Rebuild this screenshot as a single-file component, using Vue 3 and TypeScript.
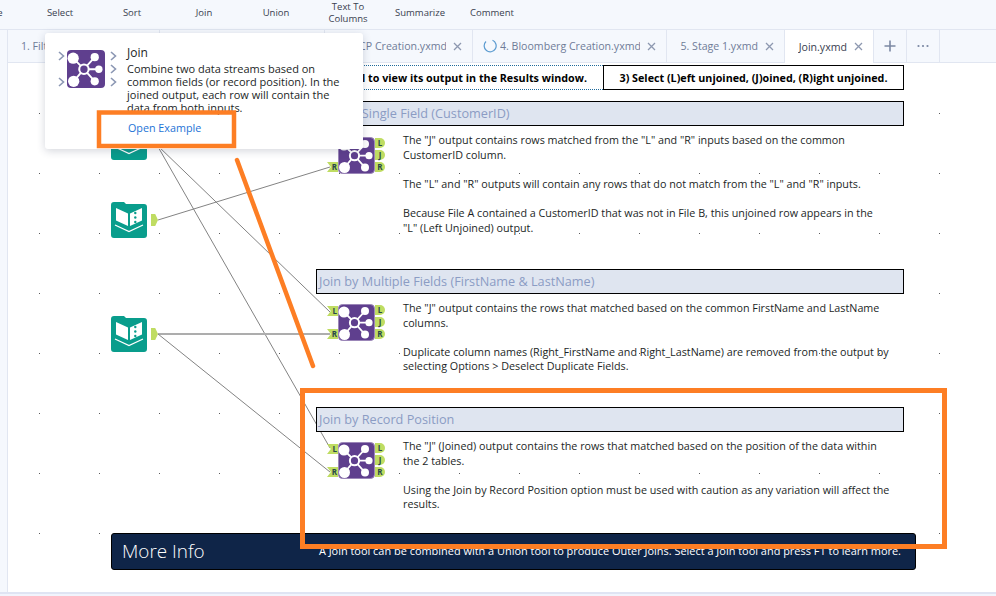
<script setup lang="ts">
const tools = ['Browse', 'Select', 'Sort', 'Join', 'Union', 'Text To Columns', 'Summarize', 'Comment']

interface Tab { label: string; width: number; active?: boolean; spin?: boolean }
const tabs: Tab[] = [
  { label: '1. Filter.yxmd', width: 152 },
  { label: '2. Mapping.yxmd', width: 165 },
  { label: '3. MCP Creation.yxmd', width: 148 },
  { label: '4. Bloomberg Creation.yxmd', width: 194, spin: true },
  { label: '5. Stage 1.yxmd', width: 118 },
  { label: 'Join.yxmd', width: 89, active: true }
]

const inputs = [61, 139, 253]
const joins = [74, 241, 379]

const sections = [
  {
    title: 'Join by Single Field (CustomerID)',
    top: 38,
    paras: [
      ['The "J" output contains rows matched from the "L" and "R" inputs based on the common', 'CustomerID column.'],
      ['The "L" and "R" outputs will contain any rows that do not match from the "L" and "R" inputs.'],
      ['Because File A contained a CustomerID that was not in File B, this unjoined row appears in the', '"L" (Left Unjoined) output.']
    ]
  },
  {
    title: 'Join by Multiple Fields (FirstName & LastName)',
    top: 206,
    paras: [
      ['The "J" output contains the rows that matched based on the common FirstName and LastName', 'columns.'],
      ['Duplicate column names (Right_FirstName and Right_LastName) are removed from the output by', 'selecting Options > Deselect Duplicate Fields.']
    ]
  },
  {
    title: 'Join by Record Position',
    top: 344,
    paras: [
      ['The "J" (Joined) output contains the rows that matched based on the position of the data within', 'the 2 tables.'],
      ['Using the Join by Record Position option must be used with caution as any variation will affect the', 'results.']
    ]
  }
]

const tipLines = [
  'Combine two data streams based on',
  'common fields (or record position). In the',
  'joined output, each row will contain the',
  'data from both inputs.'
]

const wires = [
  { d: 'M149 82 L322 249', thick: false },
  { d: 'M149 82 L322 385', thick: false },
  { d: 'M150 157 L322 104', thick: false },
  { d: 'M150 271 L322 271', thick: true },
  { d: 'M150 271 L322 409', thick: false }
]
</script>

<template>
  <div class="app">
    <header class="toolbar">
      <div v-for="t in tools" :key="t" class="tool">{{ t }}</div>
    </header>

    <div class="work">
      <div class="rail"></div>
      <div class="main">
        <nav class="tabs">
          <div
            v-for="t in tabs"
            :key="t.label"
            class="tab"
            :class="{ active: t.active }"
            :style="{ width: t.width + 'px' }"
          >
            <svg v-if="t.spin" class="spin" width="14" height="14" viewBox="0 0 14 14">
              <path d="M9.5 1.3 A6 6 0 1 1 3 2.5" fill="none" stroke="#5b9bd0" stroke-width="1.2" />
            </svg>
            <span class="tab-label">{{ t.label }}</span>
            <svg class="x" width="9" height="9" viewBox="0 0 9 9">
              <path d="M1 1 L8 8 M8 1 L1 8" stroke="currentColor" stroke-width="1.3" />
            </svg>
          </div>
          <div class="tab icon-tab plus">
            <svg width="12" height="12" viewBox="0 0 12 12">
              <path d="M6 0.5 V11.5 M0.5 6 H11.5" stroke="#7b88a3" stroke-width="1.6" />
            </svg>
          </div>
          <div class="tab icon-tab more">
            <svg width="12" height="4" viewBox="0 0 12 4">
              <circle cx="1.5" cy="2" r="1.1" fill="#7b88a3" />
              <circle cx="6" cy="2" r="1.1" fill="#7b88a3" />
              <circle cx="10.5" cy="2" r="1.1" fill="#7b88a3" />
            </svg>
          </div>
        </nav>

        <div class="canvas">
          <svg class="wires" width="988" height="529" viewBox="0 0 988 529">
            <path
              v-for="w in wires"
              :key="w.d"
              :d="w.d"
              fill="none"
              :stroke="w.thick ? '#adadad' : '#838383'"
              :stroke-width="w.thick ? 2 : 1"
            />
          </svg>

          <div class="steps">
            <div class="step step-sel">2) Select a tool to view its output in the Results window.</div>
            <div class="step step-last">3) Select (L)eft unjoined, (J)oined, (R)ight unjoined.</div>
          </div>

          <section
            v-for="s in sections"
            :key="s.title"
            class="section"
            :style="{ top: s.top + 'px' }"
          >
            <h3 class="section-title">{{ s.title }}</h3>
            <div class="section-body">
              <p v-for="(p, i) in s.paras" :key="i">
                <span v-for="l in p" :key="l" class="line">{{ l }}</span>
              </p>
            </div>
          </section>

          <div v-for="y in inputs" :key="y" class="input-node" :style="{ top: y + 'px' }">
            <svg width="36" height="36" viewBox="0 0 36 36">
              <path d="M3 0 H13 L15 2 H33 a3 3 0 0 1 3 3 V33 a3 3 0 0 1 -3 3 H3 a3 3 0 0 1 -3 -3 V3 a3 3 0 0 1 3 -3 Z" fill="#099d8c" />
              <path d="M5 6 L17 11.5 V24 L5 18.5 Z" fill="#fff" />
              <path d="M31 6 L19 11.5 V24 L31 18.5 Z" fill="#fff" />
              <path d="M4 23 L18 29.5 L32 23" fill="none" stroke="#fff" stroke-width="1.3" />
              <circle cx="24.3" cy="11" r="1.2" fill="#099d8c" />
              <circle cx="24.3" cy="15.5" r="1.2" fill="#099d8c" />
              <circle cx="24.3" cy="20" r="1.2" fill="#099d8c" />
            </svg>
            <span class="out-anchor"></span>
          </div>

          <div v-for="y in joins" :key="y" class="join-node" :style="{ top: y + 'px' }">
            <span class="in-anchor in-l">L</span>
            <span class="in-anchor in-r">R</span>
            <svg class="join-icon" width="37" height="37" viewBox="0 0 37 37">
              <rect x="0.5" y="0.5" width="36" height="36" rx="4" fill="#5f3f8e" stroke="#9b86b8" />
              <path d="M6 8 L16.5 18.7 M27 7 L16.5 18.7 M31 18.7 L16.5 18.7 M27 30.5 L16.5 18.7 M6.5 30.5 L16.5 18.7" stroke="#fff" stroke-width="1.8" />
              <circle cx="6" cy="8" r="5.5" fill="#fff" />
              <circle cx="27" cy="7" r="4" fill="#fff" />
              <circle cx="31" cy="18.7" r="3.6" fill="#fff" />
              <circle cx="27" cy="30.5" r="4" fill="#fff" />
              <circle cx="6.5" cy="30.5" r="5.5" fill="#fff" />
              <circle cx="16.5" cy="18.7" r="4.6" fill="#5f3f8e" stroke="#fff" stroke-width="2" />
            </svg>
            <span class="out-tab">L</span>
            <span class="out-tab">J</span>
            <span class="out-tab">R</span>
          </div>

          <div class="more-info">
            <span class="more-title">More Info</span>
            <span class="more-text">A Join tool can be combined with a Union tool to produce Outer Joins. Select a Join tool and press F1 to learn more.</span>
          </div>
        </div>
      </div>
    </div>

    <div class="foot"></div>

    <aside class="tip">
      <div class="tip-icon">
        <svg class="chev chev-a" width="7" height="10" viewBox="0 0 7 10"><path d="M1 1 L5.5 5 L1 9" fill="none" stroke="#8b97b3" stroke-width="1.6" /></svg>
        <svg class="chev chev-b" width="7" height="10" viewBox="0 0 7 10"><path d="M1 1 L5.5 5 L1 9" fill="none" stroke="#8b97b3" stroke-width="1.6" /></svg>
        <svg class="chev chev-c" width="7" height="10" viewBox="0 0 7 10"><path d="M1 1 L5.5 5 L1 9" fill="none" stroke="#8b97b3" stroke-width="1.6" /></svg>
        <svg class="chev chev-d" width="7" height="10" viewBox="0 0 7 10"><path d="M1 1 L5.5 5 L1 9" fill="none" stroke="#8b97b3" stroke-width="1.6" /></svg>
        <svg class="chev chev-e" width="7" height="10" viewBox="0 0 7 10"><path d="M1 1 L5.5 5 L1 9" fill="none" stroke="#8b97b3" stroke-width="1.6" /></svg>
        <svg width="38" height="38" viewBox="0 0 37 37">
          <rect x="0" y="0" width="37" height="37" rx="4" fill="#5f3f8e" />
          <path d="M6 8 L16.5 18.7 M27 7 L16.5 18.7 M31 18.7 L16.5 18.7 M27 30.5 L16.5 18.7 M6.5 30.5 L16.5 18.7" stroke="#fff" stroke-width="1.8" />
          <circle cx="6" cy="8" r="5.5" fill="#fff" />
          <circle cx="27" cy="7" r="4" fill="#fff" />
          <circle cx="31" cy="18.7" r="3.6" fill="#fff" />
          <circle cx="27" cy="30.5" r="4" fill="#fff" />
          <circle cx="6.5" cy="30.5" r="5.5" fill="#fff" />
          <circle cx="16.5" cy="18.7" r="4.6" fill="#5f3f8e" stroke="#fff" stroke-width="2" />
        </svg>
      </div>
      <div class="tip-copy">
        <h4>Join</h4>
        <p><span v-for="l in tipLines" :key="l" class="line">{{ l }}</span></p>
        <a class="tip-link">Open Example</a>
      </div>
    </aside>

    <svg class="marks" width="996" height="596" viewBox="0 0 996 596">
      <rect x="99" y="112.5" width="135" height="33.5" fill="none" stroke="#fd7e24" stroke-width="4.5" />
      <path d="M237 160 L313 366" fill="none" stroke="#fd7e24" stroke-width="4.5" stroke-linecap="round" />
      <rect x="302.5" y="390.5" width="642" height="156" fill="none" stroke="#fd7e24" stroke-width="5" />
    </svg>
  </div>
</template>

<style>
html, body { margin: 0; padding: 0; background: #fff; }
</style>

<style scoped>
.app {
  position: relative;
  width: 996px;
  height: 596px;
  overflow: hidden;
  display: flex;
  flex-direction: column;
  font-family: "Open Sans", "Noto Sans", sans-serif;
  color: #1c1f26;
}
.line { display: block; white-space: nowrap; }
.toolbar {
  flex: none;
  display: flex;
  align-items: center;
  padding-bottom: 3px;
  box-sizing: content-box;
  height: 26px;
  background: #f5f8fd;
  border-bottom: 1px solid #e1e6f1;
}
.tool {
  width: 72px;
  flex: none;
  text-align: center;
  font-size: 9.5px;
  line-height: 12px;
  color: #39404f;
}
.tool:first-child { margin-left: -50px; margin-right: 2px; }
.tool:nth-child(6) { padding: 0 8px; box-sizing: border-box; }
.work { flex: 1; display: flex; min-height: 0; }
.rail {
  width: 7px;
  flex: none;
  background: #f5f8fd;
  border-right: 1px solid #e1e6f1;
}
.main { flex: 1; display: flex; flex-direction: column; min-width: 0; }
.tabs {
  height: 32px;
  flex: none;
  display: flex;
  background: #f5f8fd;
  border-bottom: 1px solid #e1e6f1;
}
.tab {
  flex: none;
  box-sizing: border-box;
  height: 32px;
  display: flex;
  align-items: center;
  padding: 0 10px 0 13px;
  gap: 7px;
  border-right: 1px solid #e1e6f1;
  color: #6f7c98;
  font-size: 10.6px;
  white-space: nowrap;
}
.tab-label { flex: 1; overflow: hidden; text-align: right; }
.tab:first-child .tab-label { text-align: left; }
.tab.active { background: #fff; height: 33px; color: #39404f; }
.tab .x { flex: none; color: #8d98b0; }
.spin { flex: none; margin-left: -3px; margin-right: -4px; }
.icon-tab { padding: 0; justify-content: center; }
.plus, .more { width: 33px; }
.canvas {
  position: relative;
  flex: 1;
  min-height: 0;
  background-color: #fff;
  background-image: radial-gradient(circle at 0.5px 0.5px, #5c5c5c 0.6px, transparent 0.75px);
  background-size: 60px 60px;
  background-position: 31px 50px;
}
.wires { position: absolute; left: 0; top: 0; }
.steps {
  position: absolute;
  left: 232px;
  top: 2px;
  width: 664px;
  height: 25px;
  display: flex;
  font-weight: 700;
  font-size: 10.76px;
  color: #000;
}
.step {
  height: 25px;
  box-sizing: border-box;
  display: flex;
  align-items: center;
  justify-content: center;
  white-space: nowrap;
}
.step-sel {
  width: 363px;
  justify-content: flex-end;
  padding-right: 16px;
  border-top: 1px dotted #1f6a9c;
  border-bottom: 1px dotted #1f6a9c;
}
.step-last {
  width: 301px;
  border: 1px solid #000;
}
.section {
  position: absolute;
  left: 308px;
  width: 588px;
}
.section-title {
  margin: 0;
  height: 25px;
  box-sizing: border-box;
  border: 1px solid #000;
  background: #dfe5f0;
  color: #8b9cc4;
  font-size: 12.7px;
  font-weight: 400;
  line-height: 23px;
  padding-left: 2px;
  white-space: nowrap;
}
.section-body {
  margin: 7px 0 0 87px;
  width: 500px;
  font-size: 10.75px;
  line-height: 14.6px;
}
.section-body p { margin: 0 0 14.6px; }
.input-node {
  position: absolute;
  left: 103px;
  width: 48px;
  height: 36px;
  display: flex;
  align-items: center;
  gap: 4px;
}
.out-anchor {
  width: 7px;
  height: 12px;
  background: #bfdc62;
  clip-path: polygon(0 0, 60% 0, 100% 50%, 60% 100%, 0 100%);
}
.join-node {
  position: absolute;
  left: 319px;
  width: 60px;
  height: 37px;
}
.join-icon { position: absolute; left: 11px; top: 0; }
.in-anchor {
  position: absolute;
  left: 0;
  width: 11px;
  height: 10px;
  background: #bfdc62;
  clip-path: polygon(0 0, 100% 0, 100% 100%, 0 100%, 35% 50%);
  font-size: 8px;
  font-weight: 700;
  line-height: 10px;
  text-align: right;
  padding-right: 1px;
  box-sizing: border-box;
  color: #27484a;
}
.in-l { top: 2px; }
.in-r { top: 25px; }
.out-tab {
  position: absolute;
  left: 48px;
  width: 10px;
  height: 10px;
  background: #bfdc62;
  border-radius: 0 5px 5px 0;
  font-size: 8px;
  font-weight: 700;
  line-height: 10px;
  text-align: center;
  color: #27484a;
}
.out-tab:nth-of-type(3) { top: 1px; }
.out-tab:nth-of-type(4) { top: 13px; }
.out-tab:nth-of-type(5) { top: 25px; }
.more-info {
  position: absolute;
  left: 103px;
  top: 470px;
  width: 805px;
  height: 37px;
  box-sizing: border-box;
  background: #0f2548;
  border: 1px solid #000;
  border-radius: 3px;
  color: #fff;
  display: flex;
  align-items: center;
  justify-content: space-between;
  padding: 0 14px 0 10px;
}
.more-title { font-size: 18.9px; font-weight: 300; margin-top: -2px; }
.more-text { font-size: 10.94px; white-space: nowrap; margin-top: -2px; }
.foot {
  height: 4px;
  flex: none;
  background: #f1f4fc;
  border-top: 2px solid #dfe4f3;
  box-sizing: border-box;
}
.tip {
  position: absolute;
  left: 45px;
  top: 33px;
  width: 318px;
  height: 116px;
  box-sizing: border-box;
  background: #fff;
  border-radius: 3px;
  box-shadow: 0 2px 8px rgba(40, 50, 80, 0.2);
  display: flex;
  padding: 17px 8px 0 22px;
  gap: 22px;
}
.tip-icon { position: relative; width: 38px; height: 38px; flex: none; }
.chev { position: absolute; }
.chev-a { left: -9px; top: 1px; }
.chev-b { left: -9px; top: 27px; }
.chev-c { left: 43px; top: 1px; }
.chev-d { left: 43px; top: 14px; }
.chev-e { left: 43px; top: 27px; }
.tip-copy { flex: 1; min-width: 0; margin-top: -5px; }
.tip-copy h4 { margin: 0 0 2px; font-size: 12px; line-height: 15px; font-weight: 500; }
.tip-copy p { margin: 0; font-size: 11px; line-height: 13px; }
.tip-link {
  display: block;
  margin-top: 8px;
  margin-left: 1px;
  font-size: 10.75px;
  line-height: 13px;
  color: #1d72d6;
}
.marks { position: absolute; left: 0; top: 0; pointer-events: none; }
</style>
